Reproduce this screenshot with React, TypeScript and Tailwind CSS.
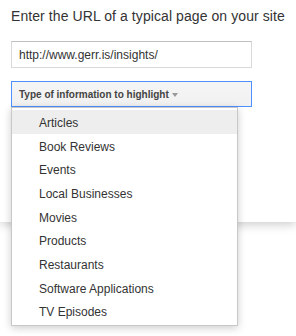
import React from "react";

const items = [
  "Articles",
  "Book Reviews",
  "Events",
  "Local Businesses",
  "Movies",
  "Products",
  "Restaurants",
  "Software Applications",
  "TV Episodes",
];

export default function App() {
  return (
    <div className="relative h-[336px] w-[296px] overflow-hidden bg-white font-['Liberation_Sans',Arial,sans-serif]">
      <div className="h-[222px] bg-white pl-[11px] pt-[8px] shadow-[0_2px_10px_rgba(0,0,0,0.22)]">
        <h1 className="text-[14px] leading-[16px] tracking-[0.08px] text-[#333]">
          Enter the URL of a typical page on your site
        </h1>
        <div className="mt-[17px] flex h-[27px] w-[241px] items-center border border-[#d9d9d9] border-t-[#c0c0c0] bg-white pl-[7px] text-[12px] text-[#333]">
          http://www.gerr.is/insights/
        </div>
        <div className="relative mt-[13px] w-[241px]">
          <div className="flex h-[26px] w-[241px] items-center border border-[#4d90fe] bg-gradient-to-b from-[#f5f5f5] to-[#f1f1f1] pl-[7px] text-[10px] font-bold text-[#444]">
            <span>Type of information to highlight</span>
            <span className="ml-[3px] mt-[1px] h-0 w-0 border-x-[3.5px] border-t-[4px] border-x-transparent border-t-[#999]" />
          </div>
          <div className="absolute left-0 top-[26px] w-[227px] border border-[#c8c8c8] bg-white pb-[2px] pt-[2px] shadow-[0_2px_8px_rgba(0,0,0,0.2)]">
            {items.map((it, i) => (
              <div
                key={it}
                className={`flex h-[23.7px] items-center pl-[27px] pt-[2px] text-[12px] text-[#333] ${
                  i === 0 ? "bg-[#eeeeee]" : ""
                }`}
              >
                {it}
              </div>
            ))}
          </div>
        </div>
      </div>
    </div>
  );
}
